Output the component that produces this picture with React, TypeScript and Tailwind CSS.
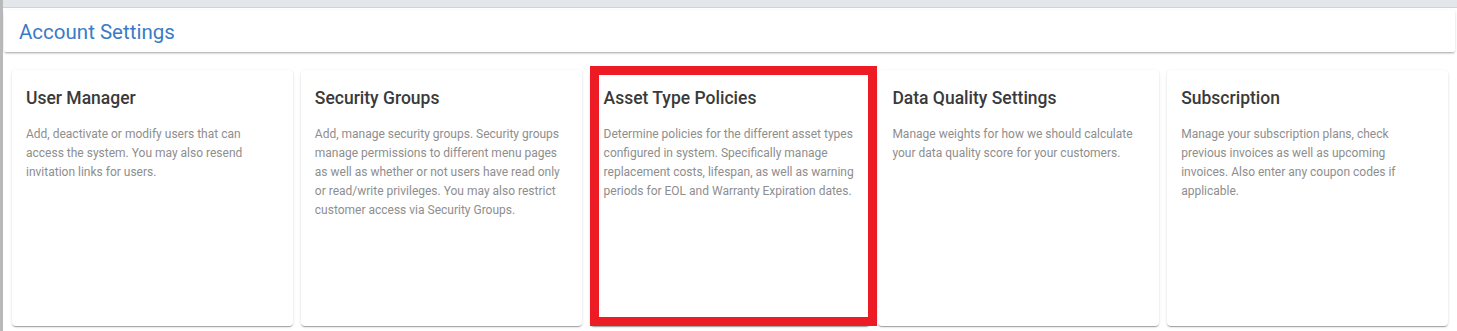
const cards = [
  {
    title: 'User Manager',
    text: 'Add, deactivate or modify users that can access the system. You may also resend invitation links for users.',
  },
  {
    title: 'Security Groups',
    text: 'Add, manage security groups. Security groups manage permissions to different menu pages as well as whether or not users have read only or read/write privileges. You may also restrict customer access via Security Groups.',
  },
  {
    title: 'Asset Type Policies',
    text: 'Determine policies for the different asset types configured in system. Specifically manage replacement costs, lifespan, as well as warning periods for EOL and Warranty Expiration dates.',
    highlight: true,
  },
  {
    title: 'Data Quality Settings',
    text: 'Manage weights for how we should calculate your data quality score for your customers.',
  },
  {
    title: 'Subscription',
    text: 'Manage your subscription plans, check previous invoices as well as upcoming invoices. Also enter any coupon codes if applicable.',
  },
];

export default function App() {
  return (
    <div
      className="flex h-[331px] w-full overflow-hidden bg-white"
      style={{ fontFamily: 'Roboto, "Liberation Sans", sans-serif' }}
    >
      {/* left rail */}
      <div className="w-[3px] shrink-0 bg-[#b7b9bb]" />

      <div className="flex min-w-0 flex-1 flex-col">
        <div className="h-[8px] shrink-0 border-b border-[#cfd4da] bg-[#e3e6ea]" />

        <div className="ml-[1px] mr-[2px] mt-[2px] flex h-[42px] items-center rounded-[2px] bg-white px-[15px] pt-[2px] shadow-[0_2px_2px_-1px_rgba(0,0,0,0.25),0_1px_3px_0_rgba(0,0,0,0.14)]">
          <h1 className="text-[20.5px] font-normal text-[#3b7bc6]">Account Settings</h1>
        </div>

        <div className="flex flex-1 gap-[8px] px-[9px] pb-[5px] pt-[18px]">
          {cards.map((c) => (
            <div
              key={c.title}
              className="relative flex-1 rounded-[4px] bg-white px-[14px] pt-[16px] shadow-[0_2px_1px_-1px_rgba(0,0,0,0.2),0_1px_1px_0_rgba(0,0,0,0.14),0_1px_3px_0_rgba(0,0,0,0.12)]"
            >
              <h2 className="text-[17.5px] font-medium leading-[24px] text-[#3a3a3a]">{c.title}</h2>
              <p className="mt-[15px] text-[12px] leading-[19px] text-[#8e8e8e]">{c.text}</p>
              {c.highlight && (
                <div className="pointer-events-none absolute bottom-0 left-0 right-[-7px] top-[-4px] border-[9px] border-[#ed1c24]" />
              )}
            </div>
          ))}
        </div>
      </div>
    </div>
  );
}
